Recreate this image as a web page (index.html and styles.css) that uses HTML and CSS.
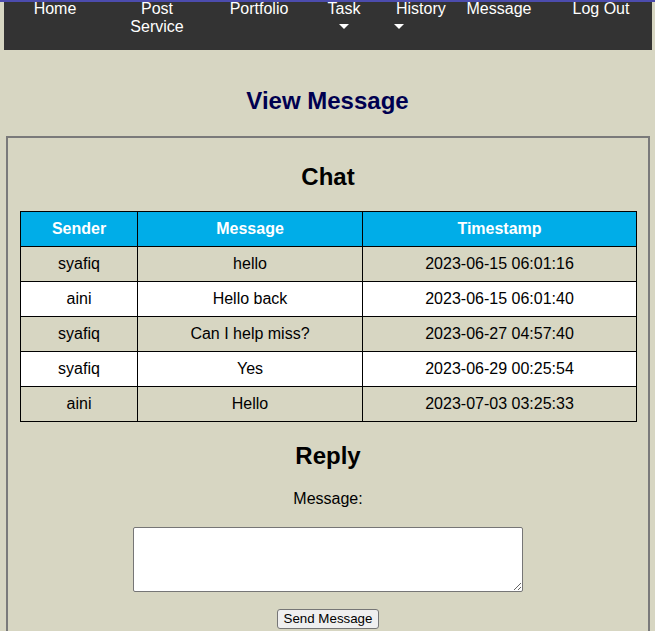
FILE: index.html
```html
<!DOCTYPE html>
<html lang="en">
<head>
<meta charset="utf-8">
<title>View Message</title>
<link rel="stylesheet" href="styles.css">
</head>
<body>
<div class="topline"></div>
<nav class="navbar">
  <a class="nav-item w102" href="#">Home</a>
  <a class="nav-item w102" href="#">Post<br>Service</a>
  <a class="nav-item w102" href="#">Portfolio</a>
  <div class="nav-item dd dd-task">
    <span>Task</span>
    <span class="caret"></span>
  </div>
  <div class="nav-item dd dd-history">
    <span>History</span>
    <span class="caret"></span>
  </div>
  <a class="nav-item w102" href="#">Message</a>
  <a class="nav-item w102" href="#">Log Out</a>
</nav>

<h1 class="page-title">View Message</h1>

<section class="panel">
  <h2 class="section-title chat-title">Chat</h2>
  <table class="chat-table">
    <colgroup>
      <col class="c1">
      <col class="c2">
      <col class="c3">
    </colgroup>
    <thead>
      <tr><th>Sender</th><th>Message</th><th>Timestamp</th></tr>
    </thead>
    <tbody>
      <tr><td>syafiq</td><td>hello</td><td>2023-06-15 06:01:16</td></tr>
      <tr><td>aini</td><td>Hello back</td><td>2023-06-15 06:01:40</td></tr>
      <tr><td>syafiq</td><td>Can I help miss?</td><td>2023-06-27 04:57:40</td></tr>
      <tr><td>syafiq</td><td>Yes</td><td>2023-06-29 00:25:54</td></tr>
      <tr><td>aini</td><td>Hello</td><td>2023-07-03 03:25:33</td></tr>
    </tbody>
  </table>

  <h2 class="section-title reply-title">Reply</h2>
  <form class="reply-form">
    <label class="reply-label" for="msg">Message:</label>
    <textarea id="msg" class="reply-text"></textarea>
    <button type="button" class="send-btn">Send Message</button>
  </form>
</section>
</body>
</html>
```
FILE: styles.css
```css
html, body {
  margin: 0;
  padding: 0;
}
body {
  background: #d7d6c2;
  font-family: "Liberation Sans", Arial, sans-serif;
  font-size: 16px;
  color: #000;
}
.topline {
  position: fixed;
  top: 0;
  left: 0;
  right: 0;
  height: 2px;
  background: #4c4cae;
  z-index: 10;
}
.navbar {
  display: flex;
  margin: 0 3px 0 4px;
  height: 50px;
  background: #333333;
}
.nav-item {
  color: #fff;
  text-decoration: none;
  font-size: 16px;
  line-height: 18px;
  text-align: center;
  box-sizing: border-box;
}
.w102 {
  width: 102px;
  flex: none;
}
.dd {
  display: flex;
  flex-direction: column;
  flex: none;
}
.dd-task {
  width: 68px;
  align-items: center;
}
.dd-history {
  width: 70px;
  align-items: flex-start;
  padding-left: 18px;
}
.caret {
  display: block;
  width: 0;
  height: 0;
  margin-top: 6px;
  border-left: 5px solid transparent;
  border-right: 5px solid transparent;
  border-top: 5px solid #fff;
}
.dd-history .caret {
  margin-left: -2px;
}
.page-title {
  margin: 37px 0 21px;
  text-align: center;
  font-size: 24px;
  line-height: 28px;
  font-weight: bold;
  color: #000050;
}
.panel {
  margin: 0 5px 0 6px;
  border: 2px solid #7a7a7a;
  padding: 0 12px 20px;
}
.section-title {
  text-align: center;
  font-size: 24px;
  line-height: 28px;
  font-weight: bold;
  margin: 0;
}
.chat-title {
  margin: 25px 0 20px;
}
.chat-table {
  width: 100%;
  border-collapse: collapse;
  table-layout: fixed;
  border: 1px solid #000;
}
.c1 { width: 117px; }
.c2 { width: 225px; }
.c3 { width: 274px; }
.chat-table th,
.chat-table td {
  border: 1px solid #000;
  padding: 8px;
  line-height: 18px;
  text-align: center;
  font-size: 16px;
}
.chat-table th {
  background: #00ade8;
  color: #fff;
  font-weight: bold;
}
.chat-table tbody tr:nth-child(odd) td {
  background: #d7d6c2;
}
.chat-table tbody tr:nth-child(even) td {
  background: #ffffff;
}
.reply-title {
  margin: 20px 0 20px;
}
.reply-form {
  display: flex;
  flex-direction: column;
  align-items: center;
}
.reply-label {
  line-height: 18px;
  font-size: 16px;
}
.reply-text {
  margin-top: 19px;
  width: 390px;
  height: 65px;
  box-sizing: border-box;
  border: 1px solid #767676;
  border-radius: 2px;
  background: #fff;
}
.send-btn {
  margin-top: 17px;
  font-family: "Liberation Sans", Arial, sans-serif;
  font-size: 13.333px;
  padding: 1px 6px;
  background: #efefef;
  border: 1px solid #767676;
  border-radius: 3px;
  color: #000;
  line-height: 16px;
}
```
